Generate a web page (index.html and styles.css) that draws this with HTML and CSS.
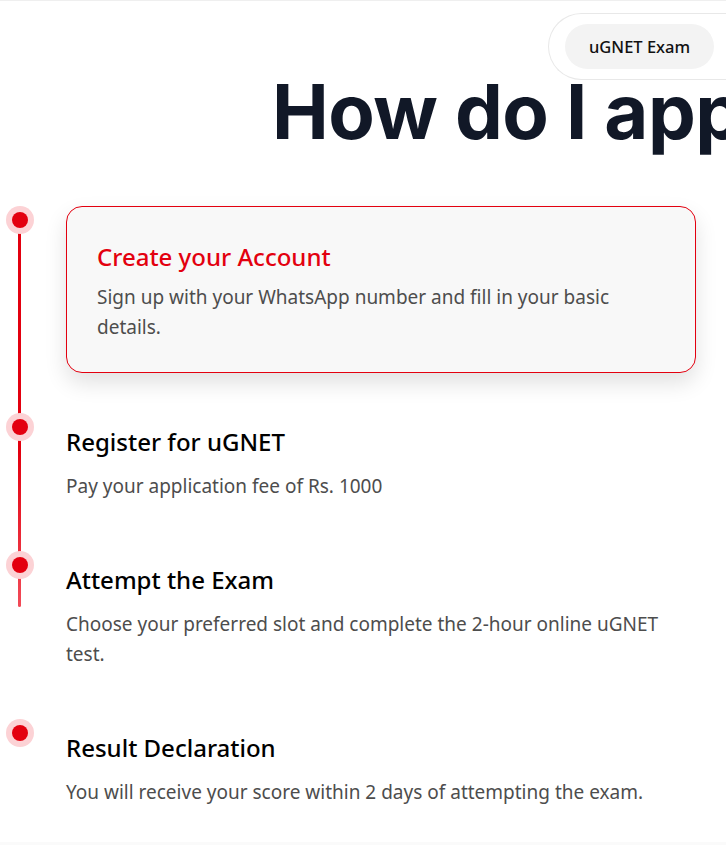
FILE: index.html
```html
<!DOCTYPE html>
<html lang="en">
<head>
<meta charset="utf-8">
<title>How do I apply for uGNET?</title>
<link rel="stylesheet" href="styles.css">
</head>
<body>
<div class="page">
  <header class="topbar">
    <nav class="tabs">
      <span class="tab tab-active">uGNET Exam</span>
      <span class="tab">Results</span>
    </nav>
  </header>

  <h1 class="hero-title">How do I apply for uGNET?</h1>

  <ol class="timeline">
    <li class="step step-active">
      <span class="dot"></span>
      <div class="step-body">
        <h2 class="step-title">Create your Account</h2>
        <p class="step-text">Sign up with your WhatsApp number and fill in your basic details.</p>
      </div>
    </li>
    <li class="step">
      <span class="dot"></span>
      <div class="step-body">
        <h2 class="step-title">Register for uGNET</h2>
        <p class="step-text">Pay your application fee of Rs. 1000</p>
      </div>
    </li>
    <li class="step">
      <span class="dot"></span>
      <div class="step-body">
        <h2 class="step-title">Attempt the Exam</h2>
        <p class="step-text">Choose your preferred slot and complete the 2-hour online uGNET test.</p>
      </div>
    </li>
    <li class="step">
      <span class="dot"></span>
      <div class="step-body">
        <h2 class="step-title">Result Declaration</h2>
        <p class="step-text">You will receive your score within 2 days of attempting the exam.</p>
      </div>
    </li>
    <span class="progress" aria-hidden="true"></span>
  </ol>
</div>
<div class="next-section"></div>
</body>
</html>
```

FILE: styles.css
```css
* {
  box-sizing: border-box;
}

html, body {
  margin: 0;
  padding: 0;
  background: #ffffff;
  overflow-x: hidden;
}

body {
  font-family: "Noto Sans", "Open Sans", sans-serif;
  color: #111111;
}

.page {
  border-top: 1px solid #efefef;
  height: 842px;
  overflow: hidden;
}

/* top navigation pill group */
.topbar {
  display: flex;
  justify-content: flex-end;
  padding-top: 12px;
}

.tabs {
  display: flex;
  gap: 12px;
  flex-shrink: 0;
  width: 200px;
  margin-right: -22px;
  padding: 10px 16px;
  border: 1px solid #e8e8e8;
  border-right: none;
  border-radius: 34px 0 0 34px;
  background: #ffffff;
  white-space: nowrap;
  overflow: hidden;
}

.tab {
  display: inline-flex;
  align-items: center;
  justify-content: center;
  height: 45px;
  padding: 0 24px;
  border-radius: 23px;
  font-size: 16.5px;
  font-weight: 500;
  color: #111111;
}

.tab-active {
  background: #f3f3f3;
}

.hero-title {
  margin: -15px 0 0;
  padding-left: 272px;
  font-family: "Inter", sans-serif;
  font-size: 76px;
  font-weight: 700;
  line-height: 92px;
  letter-spacing: -0.5px;
  color: #111827;
  white-space: nowrap;
}

/* steps */
.timeline {
  position: relative;
  list-style: none;
  margin: 49px 0 0;
  padding: 0 30px 0 66px;
  display: flex;
  flex-direction: column;
  gap: 37px;
}

.progress {
  position: absolute;
  left: 18px;
  top: 14px;
  width: 3px;
  height: 387px;
  border-radius: 2px;
  background: linear-gradient(#e3000f, #e3000f 60%, #f24b58);
}

.step {
  position: relative;
  padding: 13px 0;
}

.dot {
  position: absolute;
  z-index: 1;
  left: -54px;
  top: 6px;
  width: 16px;
  height: 16px;
  border-radius: 50%;
  background: #e3000f;
  box-shadow: 0 0 0 6px #fcd2d5;
}

.step-active {
  padding: 0;
  margin-bottom: 3px;
}

.step-active .step-body {
  padding: 34px 30px 30px;
  border: 1px solid #e3000f;
  border-radius: 16px;
  background: #f8f8f8;
  box-shadow: 0 10px 22px rgba(0, 0, 0, 0.12);
}

.step-title {
  margin: 0;
  font-size: 24px;
  font-weight: 500;
  line-height: 32px;
  color: #000000;
}

.step-active .step-title {
  color: #e3000f;
}

.step-text {
  margin: 13px 0 0;
  font-size: 19px;
  line-height: 30px;
  color: #4d4d4d;
}

.step-active .step-text {
  margin-top: 9px;
}

.next-section {
  height: 20px;
  background: #fafafa;
}
```
